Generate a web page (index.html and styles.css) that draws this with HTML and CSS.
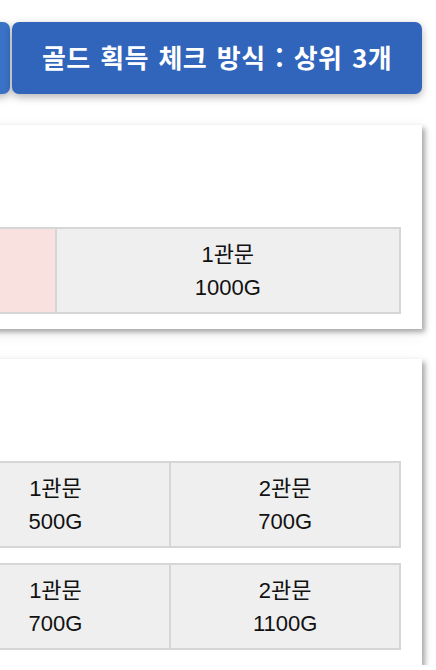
FILE: index.html
```html
<!DOCTYPE html>
<html lang="ko">
<head>
<meta charset="utf-8">
<title>골드 획득</title>
<link rel="stylesheet" href="styles.css">
</head>
<body>
<div class="page">
  <div class="btn-row">
    <button class="btn btn-other" type="button" aria-label="이전 방식"></button>
    <button class="btn btn-main" type="button">골드 획득 체크 방식 : 상위 3개</button>
  </div>

  <section class="card">
    <div class="grid cols-2">
      <div class="cell cell-pink"></div>
      <div class="cell"><div>1관문</div><div>1000G</div></div>
    </div>
  </section>

  <section class="card card-tall">
    <div class="grid cols-3">
      <div class="cell"></div>
      <div class="cell"><div>1관문</div><div>500G</div></div>
      <div class="cell"><div>2관문</div><div>700G</div></div>
    </div>
    <div class="grid cols-3">
      <div class="cell"></div>
      <div class="cell"><div>1관문</div><div>700G</div></div>
      <div class="cell"><div>2관문</div><div>1100G</div></div>
    </div>
  </section>
</div>
</body>
</html>
```

FILE: styles.css
```css
html, body {
  margin: 0;
  padding: 0;
  background: #ffffff;
  overflow: hidden;
}

body {
  font-family: "Liberation Sans", "Noto Sans CJK KR", sans-serif;
  color: #111111;
}

.page {
  width: 732px;
  margin-left: -310px;
  padding-top: 22px;
}

.btn-row {
  display: flex;
  gap: 2px;
  height: 72px;
}

.btn {
  border: none;
  border-radius: 7px;
  color: #ffffff;
  font-family: "Noto Sans CJK KR", sans-serif;
  font-weight: 700;
  font-size: 26px;
  letter-spacing: 0.4px;
  word-spacing: 2px;
  box-shadow: 0 3px 9px rgba(0, 0, 0, 0.3);
  padding: 0 0 3px 0;
}

.btn-other {
  flex: 1;
  background: #3a72c8;
}

.btn-main {
  width: 410px;
  background: #3164bb;
}

.card {
  margin-top: 31px;
  background: #ffffff;
  padding: 102px 21px 15px 20px;
  box-shadow: 3px 3px 5px rgba(0, 0, 0, 0.32), 0 4px 16px rgba(0, 0, 0, 0.07);
  display: flex;
  flex-direction: column;
  gap: 15px;
}

.card-tall {
  margin-top: 30px;
}

.grid {
  display: grid;
  gap: 2px;
  padding: 2px;
  background: #d6d6d6;
}

.cols-2 {
  grid-template-columns: 1fr 1fr;
}

.cols-3 {
  grid-template-columns: 1fr 1fr 1fr;
}

.cell {
  background: #efefef;
  height: 83px;
  box-sizing: border-box;
  padding-top: 9px;
  text-align: center;
  font-size: 22px;
  line-height: 33px;
}

.cell-pink {
  background: #f8e1de;
}
```
